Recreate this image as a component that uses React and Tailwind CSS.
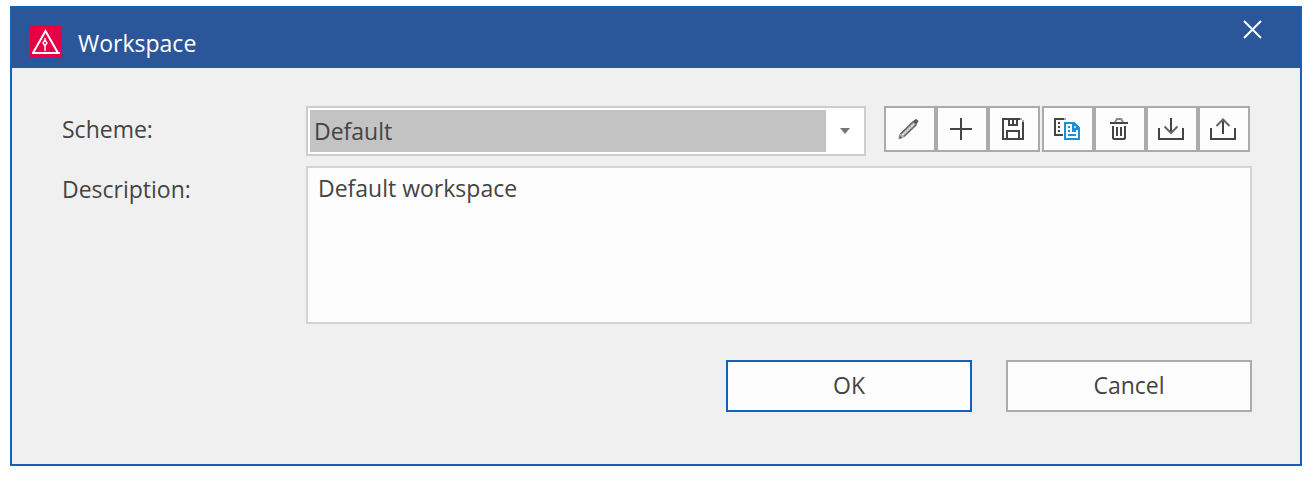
import clsx from "clsx";

const tools = [
  {
    id: "edit",
    label: "Edit",
    icon: (
      <g>
        <path d="M2 21.5l1.500-5.500L17 3l3-2 2.500 2L21 6.500 7.500 19.500z" fill="#b0b0b0" />
        <path d="M4.500 16L17 4M8 18.500L20.500 6.500" stroke="#6a6a6a" strokeWidth="1.6" />
        <path d="M6.500 17L18 6" stroke="#ececec" strokeWidth="1.4" strokeDasharray="2 1" />
        <path d="M16.500 3.500L20 1l2.500 2L20 6.500z" fill="#5a5a5a" />
        <path d="M3.500 17l3 3-3.500 1z" fill="#6a6a6a" />
      </g>
    ),
  },
  {
    id: "new",
    label: "New",
    icon: <path d="M13 0v22M2 11h22" stroke="#444" strokeWidth="2" shapeRendering="crispEdges" />,
  },
  {
    id: "save",
    label: "Save",
    icon: (
      <g fill="none" stroke="#444" strokeWidth="2" shapeRendering="crispEdges">
        <path d="M20 1H3v20h20V4" />
        <path d="M9 1v6h8V1M13 1v5M7 22v-9h12v9" />
        <path d="M20 0h2v2h2v2h-2V2h-2z" fill="#aaa" stroke="none" />
      </g>
    ),
  },
  {
    id: "copy",
    label: "Copy",
    icon: (
      <g fill="none" strokeWidth="2" shapeRendering="crispEdges">
        <path d="M10 1H1v16h8M4 5h2M4 9h2M4 13h2" stroke="#444" />
        <path d="M10 0h2v2h-2z" fill="#aaa" />
        <path d="M20 5h-9v16h14V10M14 9h2M14 13h2M18 13h4M14 17h8" stroke="#1e90cf" />
        <path d="M18 4h2l6 6v2h-8z" fill="#1e90cf" />
        <path d="M20 8h2v2h-2z" fill="#b5dcf0" />
      </g>
    ),
  },
  {
    id: "delete",
    label: "Delete",
    icon: (
      <g fill="none" stroke="#444" strokeWidth="2">
        <path d="M4 5h18" shapeRendering="crispEdges" />
        <path d="M9 4l2-3h4l2 3" stroke="#888" />
        <path d="M7 8v12l1 1h10l1-1V8" />
        <path d="M11 9v9M15 9v9" shapeRendering="crispEdges" />
      </g>
    ),
  },
  {
    id: "import",
    label: "Import",
    icon: (
      <g fill="none" stroke="#444" strokeWidth="2">
        <path d="M1 10v11h24V10M13 0v14" shapeRendering="crispEdges" />
        <path d="M6.5 8.5L13 15l6.500-6.500" stroke="#666" />
      </g>
    ),
  },
  {
    id: "export",
    label: "Export",
    icon: (
      <g fill="none" stroke="#444" strokeWidth="2">
        <path d="M1 10v11h24V10M13 2v14" shapeRendering="crispEdges" />
        <path d="M6.5 8L13 1.5 19.5 8" stroke="#666" />
      </g>
    ),
  },
];

function ToolButton({ label, icon, className }) {
  return (
    <button
      type="button"
      aria-label={label}
      className={clsx(
        "flex h-[46px] w-[52px] items-center justify-center border-2 border-[#ababab] bg-[#fdfdfd] hover:bg-[#e5f1fb]",
        className
      )}
    >
      <svg width="28" height="22" viewBox="0 0 28 22">
        {icon}
      </svg>
    </button>
  );
}

function Logo() {
  return (
    <svg className="h-8 w-8 shrink-0" viewBox="0 0 32 32" fill="none">
      <path d="M0 0h32v32H0z" fill="#e60045" />
      <path d="M3 27L15.5 5 28 27" stroke="#fff" strokeWidth="2" />
      <path d="M2 27h28" stroke="#fff" strokeWidth="2" />
      <path d="M15 12v3M15 14l-2 3 2 3 2-3zM15 20v5" stroke="#fff" strokeWidth="1.4" />
    </svg>
  );
}

function DialogButton({ primary, children }) {
  return (
    <button
      type="button"
      className={clsx(
        "h-[52px] w-[246px] border-2 bg-[#fdfdfd] pb-[2px] hover:bg-[#e5f1fb]",
        primary ? "border-[#1660b5]" : "border-[#ababab]"
      )}
    >
      {children}
    </button>
  );
}

export default function App() {
  return (
    <div className="bg-white px-[10px] pt-[6px] pb-3 font-['Open_Sans',sans-serif] text-[23px] leading-8 text-[#444]">
      <div role="dialog" aria-labelledby="dialog-title" className="border-2 border-[#1660b5] bg-[#f0f0f0]">
        <header className="flex h-[60px] items-start justify-between bg-[#2b579a] pr-[37px] pl-[18px] text-white">
          <div className="flex gap-4 pt-[18px]">
            <Logo />
            <h1 id="dialog-title" className="pt-px">
              Workspace
            </h1>
          </div>
          <button type="button" aria-label="Close" className="mt-3">
            <svg width="20" height="20" viewBox="0 0 20 20" stroke="#fff" strokeWidth="2">
              <path d="M1 1l17 17M18 1L1 18" />
            </svg>
          </button>
        </header>

        <form className="pt-[38px] pr-12 pb-[52px] pl-[50px]">
          <div className="grid grid-cols-[244px_1fr] gap-y-[10px]">
            <label htmlFor="scheme" className="pt-[7px]">
              Scheme:
            </label>
            <div className="flex gap-[18px] pr-[2px]">
              <div className="relative flex-1 border-2 border-[#cdcdcd] bg-white p-[2px]">
                <select
                  id="scheme"
                  className="h-[42px] w-full appearance-none border-r-[36px] border-white bg-[#c3c3c3] pl-1 outline-none"
                >
                  <option>Default</option>
                </select>
                <svg
                  className="pointer-events-none absolute top-5 right-[14px]"
                  width="10"
                  height="6"
                  viewBox="0 0 10 6"
                >
                  <path d="M0 0h10L5 6z" fill="#777" />
                </svg>
              </div>
              <div className="flex">
                {tools.map((tool) => (
                  <ToolButton
                    key={tool.id}
                    label={tool.label}
                    icon={tool.icon}
                    className={tool.id === "copy" && "ml-[2px]"}
                  />
                ))}
              </div>
            </div>

            <label htmlFor="description" className="pt-[7px]">
              Description:
            </label>
            <textarea
              id="description"
              className="block h-[158px] w-full resize-none border-2 border-[#d3d3d3] bg-[#fdfdfd] px-[10px] py-1 outline-none"
              defaultValue="Default workspace"
            />
          </div>

          <div className="mt-9 flex justify-end gap-[34px]">
            <DialogButton primary>OK</DialogButton>
            <DialogButton>Cancel</DialogButton>
          </div>
        </form>
      </div>
    </div>
  );
}
